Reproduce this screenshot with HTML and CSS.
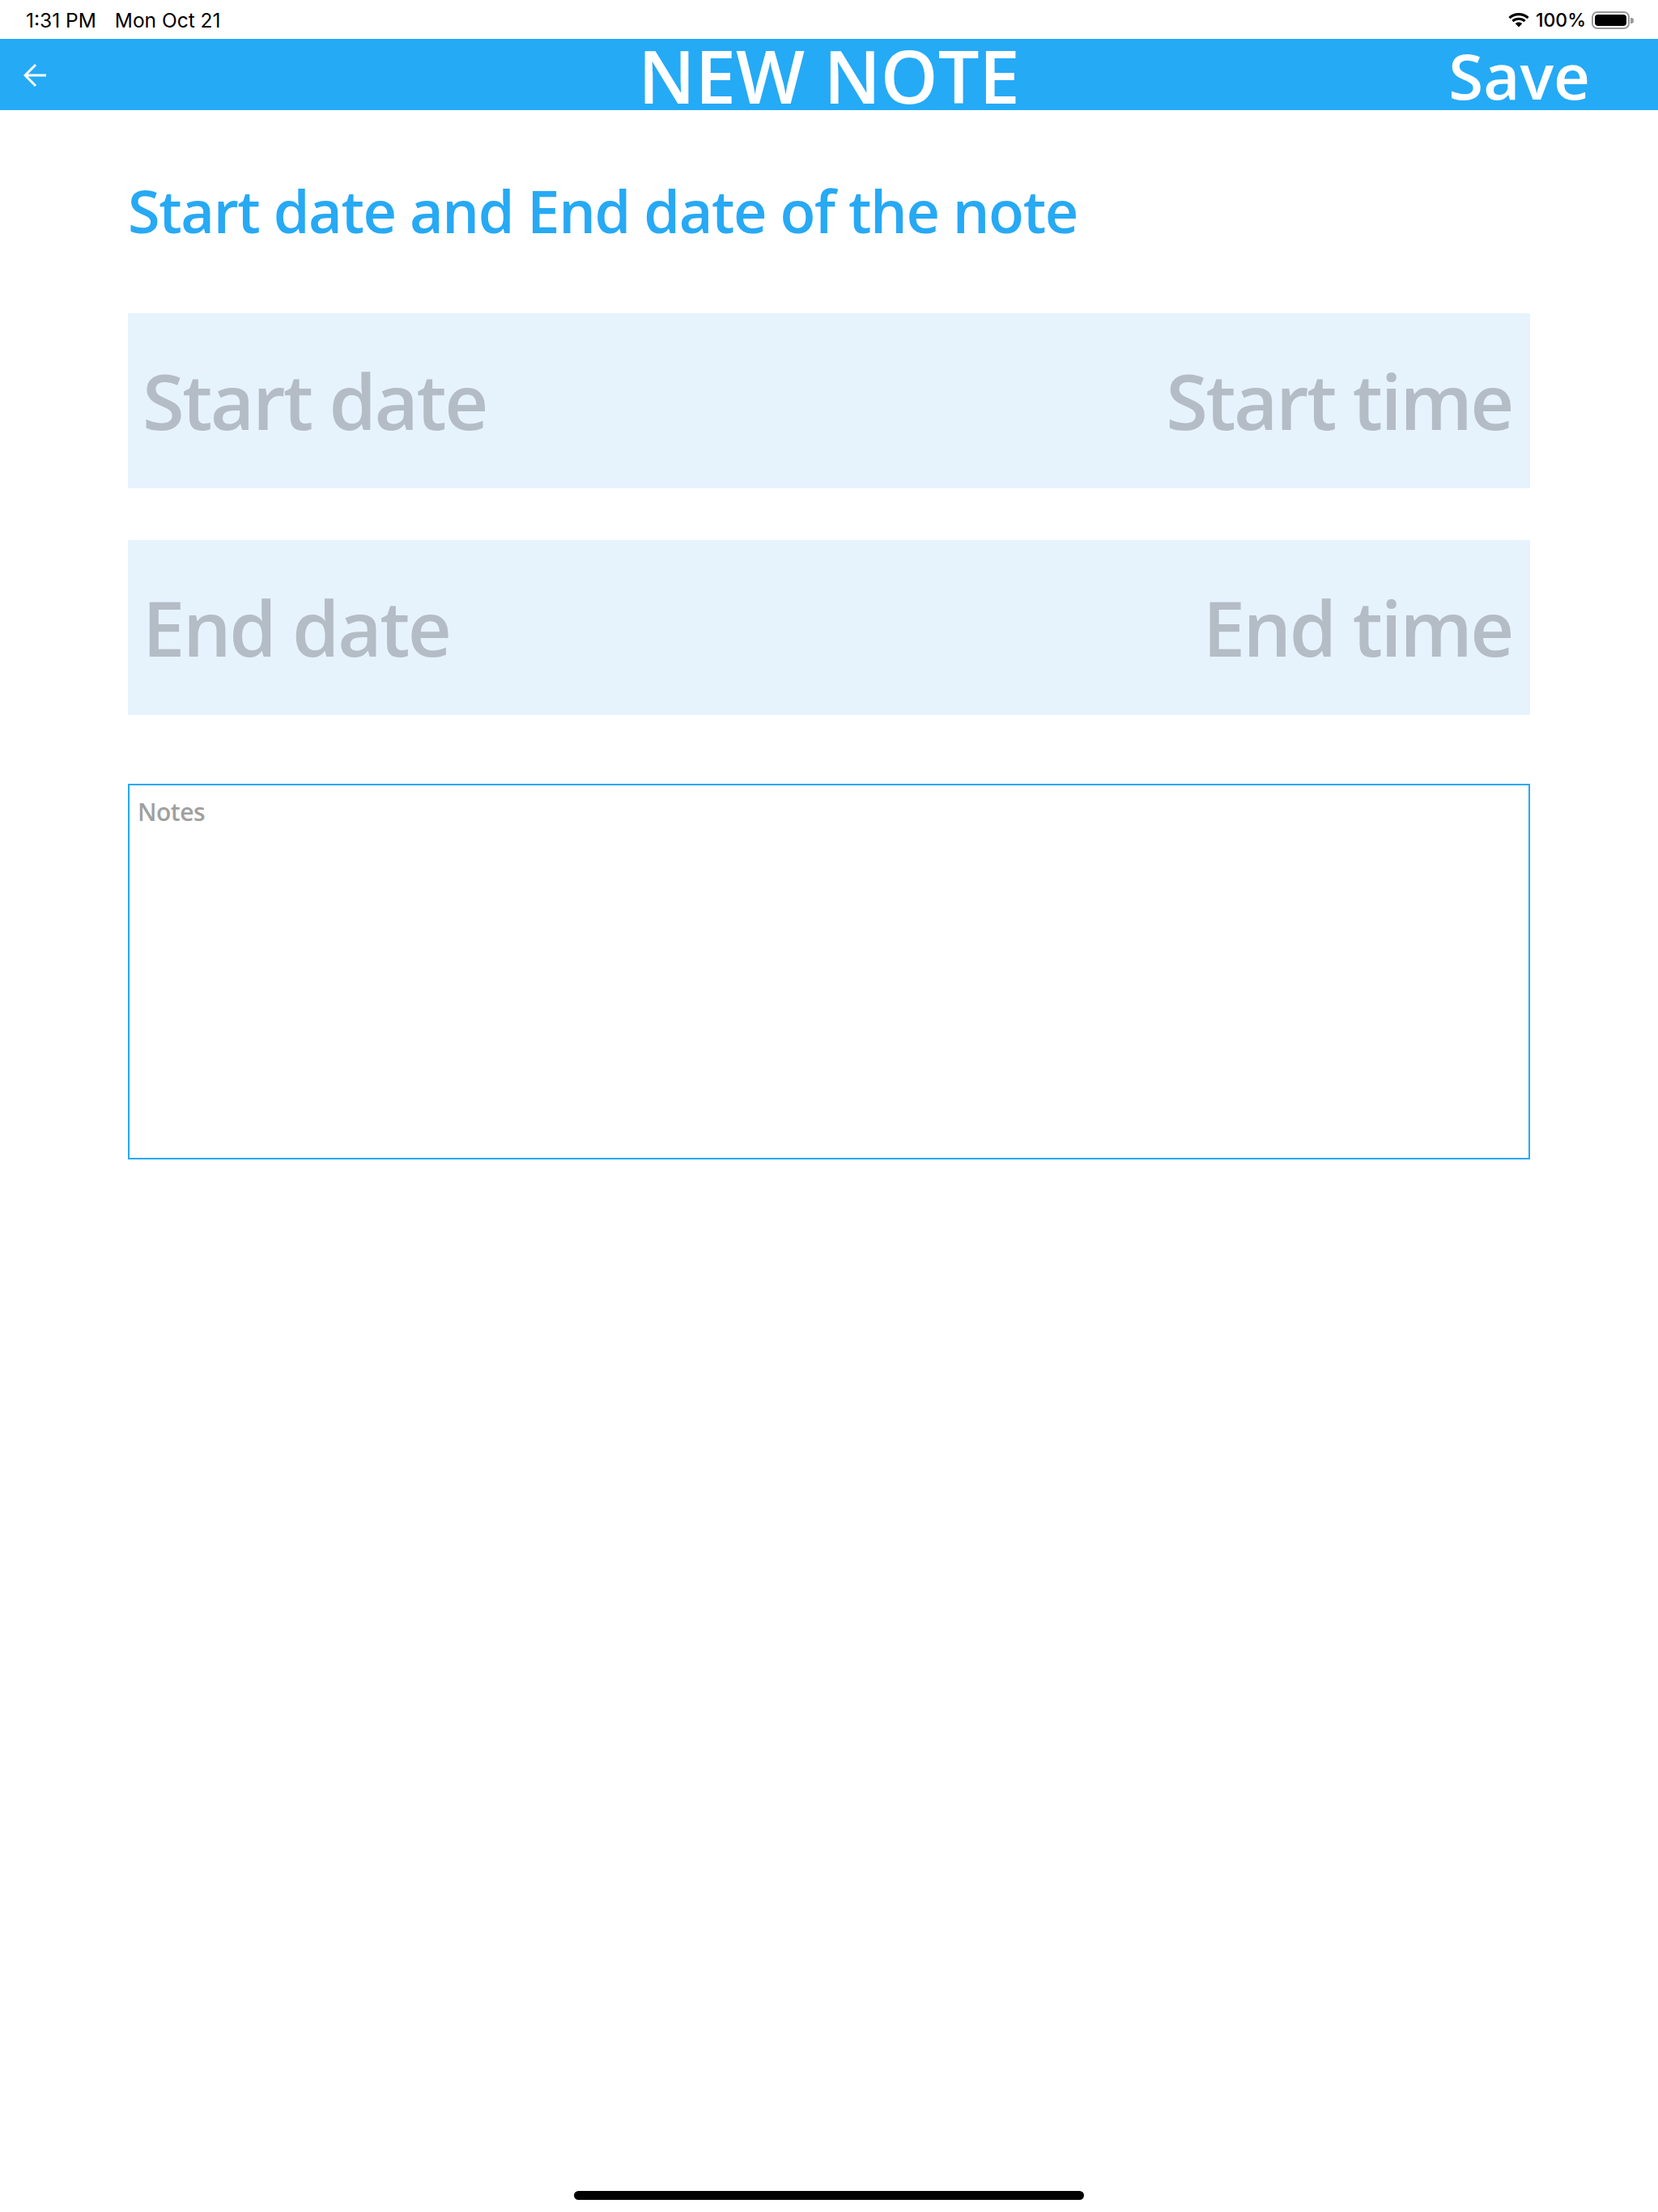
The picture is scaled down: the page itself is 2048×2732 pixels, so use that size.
FILE: index.html
```html
<!DOCTYPE html>
<html lang="en">
<head>
<meta charset="utf-8">
<title>New Note</title>
<link rel="stylesheet" href="styles.css">
</head>
<body>
<div class="screen">
  <div class="status">
    <div class="status-left">
      <span class="time">1:31 PM</span>
      <span class="date">Mon Oct 21</span>
    </div>
    <div class="status-right">
      <svg class="wifi" width="28" height="20" viewBox="0 0 28 20">
        <path d="M14 4.2c4 0 7.6 1.5 10.4 4l2.2-2.3C23.2 2.8 18.8 1 14 1S4.8 2.8 1.4 5.9l2.2 2.3C6.4 5.7 10 4.2 14 4.2z" fill="#000"/>
        <path d="M14 9.8c2.5 0 4.7.9 6.4 2.4l2.2-2.3C20.3 7.9 17.3 6.7 14 6.7S7.7 7.9 5.4 9.9l2.2 2.3c1.7-1.5 3.9-2.4 6.4-2.4z" fill="#000"/>
        <path d="M14 12.5c-1.7 0-3.2.6-4.3 1.6L14 18.6l4.3-4.5c-1.1-1-2.6-1.6-4.3-1.6z" fill="#000"/>
      </svg>
      <span class="battery-pct">100%</span>
      <div class="battery">
        <div class="battery-body"><div class="battery-fill"></div></div>
        <div class="battery-tip"></div>
      </div>
    </div>
  </div>

  <header class="topbar">
    <div class="topbar-left">
      <svg class="back" width="30" height="30" viewBox="0 0 30 30">
        <path d="M28 15H3M15 2L2 15l13 13" fill="none" stroke="#fff" stroke-width="3"/>
      </svg>
    </div>
    <h1 class="topbar-title">NEW NOTE</h1>
    <div class="topbar-right"><span class="save">Save</span></div>
  </header>

  <main class="content">
    <h2 class="section-title">Start date and End date of the note</h2>
    <div class="field">
      <span class="placeholder">Start date</span>
      <span class="placeholder">Start time</span>
    </div>
    <div class="field field-second">
      <span class="placeholder">End date</span>
      <span class="placeholder">End time</span>
    </div>
    <div class="notes">
      <span class="notes-placeholder">Notes</span>
    </div>
  </main>

  <div class="home-indicator"></div>
</div>
</body>
</html>
```

FILE: styles.css
```css
* { box-sizing: border-box; }

html, body {
  margin: 0;
  padding: 0;
  background: #fff;
}

.screen {
  position: relative;
  width: 2048px;
  height: 2732px;
  overflow: hidden;
  background: #fff;
  font-family: "Open Sans", "Noto Sans", sans-serif;
}

/* status bar */
.status {
  height: 48px;
  display: flex;
  justify-content: space-between;
  align-items: center;
  padding: 0 30px 0 32px;
  font-family: Inter, "Liberation Sans", sans-serif;
  font-size: 23px;
  color: #000;
}

.status-left {
  display: flex;
  gap: 23px;
  padding-top: 2px;
  font-size: 24.5px;
  font-weight: 400;
}

.status-right {
  display: flex;
  align-items: center;
  gap: 7px;
  padding-top: 2px;
  font-weight: 500;
}

.wifi { display: block; }

.battery {
  display: flex;
  align-items: center;
}

.battery-body {
  width: 47px;
  height: 22px;
  border: 2px solid #9a9a9a;
  border-radius: 7px;
  padding: 2px;
}

.battery-fill {
  width: 100%;
  height: 100%;
  background: #000;
  border-radius: 4px;
}

.battery-tip {
  width: 4px;
  height: 7px;
  background: #9a9a9a;
  border-radius: 0 3px 3px 0;
  margin-left: 1px;
}

/* top bar */
.topbar {
  height: 88px;
  background: #25aaf6;
  display: grid;
  grid-template-columns: 1fr auto 1fr;
  align-items: center;
  color: #fff;
}

.topbar-left {
  padding-left: 29px;
  display: flex;
  align-items: center;
}

.back { display: block; }

.topbar-title {
  margin: 0;
  font-size: 90px;
  font-weight: 600;
  line-height: 1;
}

.topbar-right {
  display: flex;
  justify-content: flex-end;
  padding-right: 84px;
}

.save {
  font-size: 78px;
  font-weight: 600;
  line-height: 1;
}

/* content */
.content {
  padding: 88px 158px 0 158px;
  display: flex;
  flex-direction: column;
}

.section-title {
  margin: 0;
  font-size: 72px;
  font-weight: 600;
  line-height: 1;
  letter-spacing: -1.4px;
  color: #27a9f4;
}

.field {
  margin-top: 91px;
  height: 216px;
  background: #e6f3fd;
  display: flex;
  justify-content: space-between;
  align-items: center;
  padding: 0 22px 0 18px;
}

.field-second {
  margin-top: 64px;
}

.placeholder {
  font-size: 94px;
  font-weight: 600;
  line-height: 1;
  letter-spacing: -2.5px;
  color: #b4bcc6;
}

.notes {
  margin-top: 85px;
  height: 464px;
  border: 2px solid #25a9f5;
  padding: 18px 10px;
}

.notes-placeholder {
  display: block;
  font-size: 30px;
  font-weight: 600;
  line-height: 1;
  letter-spacing: -0.5px;
  color: #a0a0a0;
}

.home-indicator {
  position: absolute;
  left: 709px;
  top: 2706px;
  width: 630px;
  height: 11px;
  border-radius: 6px;
  background: #000;
}
```
